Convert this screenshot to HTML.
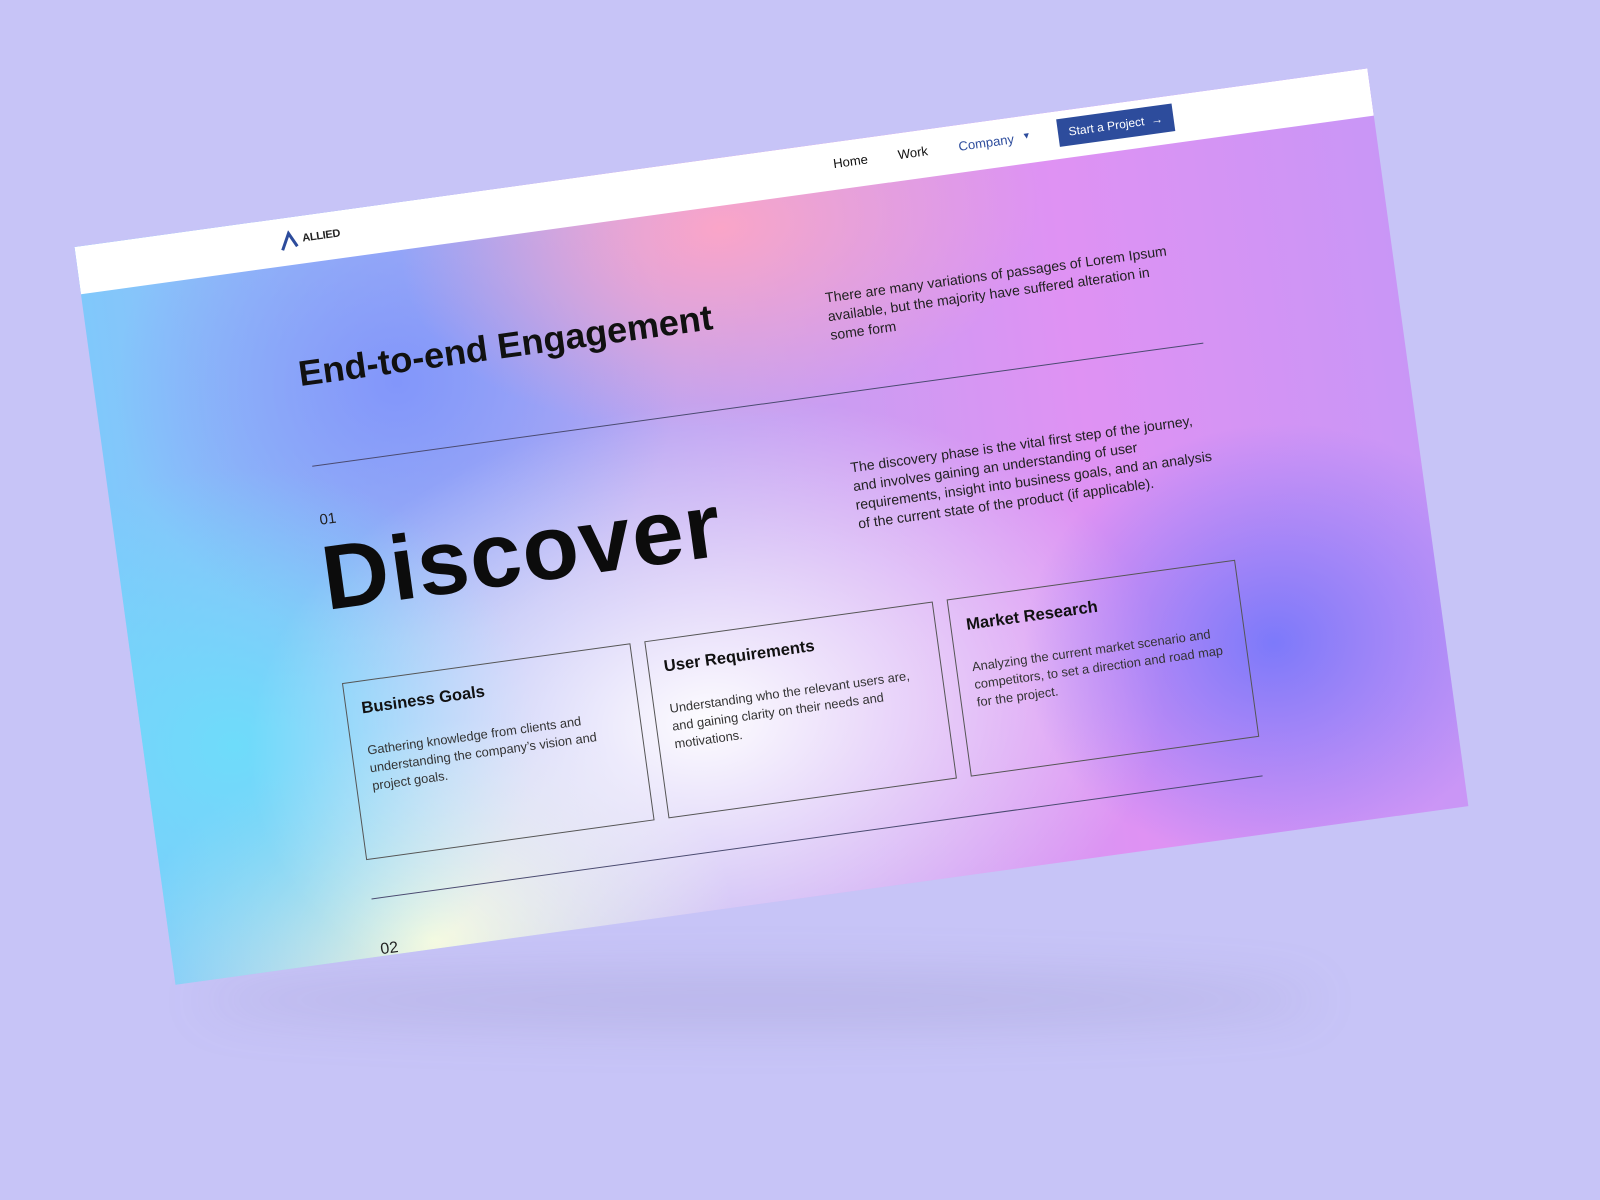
<!DOCTYPE html>
<html><head><meta charset="utf-8"><style>
html,body{margin:0;padding:0;width:1600px;height:1200px;overflow:hidden;background:#c7c4f7;font-family:"Liberation Sans",sans-serif;}
.shadow{position:absolute;left:200px;top:975px;width:1120px;height:50px;border-radius:50%;background:rgba(110,105,160,0.16);filter:blur(24px);}
.page{position:absolute;left:0;top:0;width:1300px;height:750px;transform-origin:0 0;transform:matrix(0.9945,-0.1374,0.1347,0.9836,74.5,247);overflow:hidden;
background:
radial-gradient(ellipse 250px 220px at 1130px 560px, rgba(120,120,250,0.95), rgba(140,130,250,0) 100%),
radial-gradient(ellipse 460px 320px at 560px 560px, rgba(255,255,255,0.97), rgba(255,255,255,0) 100%),
radial-gradient(ellipse 300px 280px at 90px 520px, rgba(110,220,250,1), rgba(110,220,250,0) 100%),
radial-gradient(ellipse 300px 220px at 260px 740px, rgba(245,250,220,1), rgba(245,250,220,0) 100%),
radial-gradient(ellipse 320px 200px at 640px 70px, rgba(250,165,200,1), rgba(250,160,200,0) 100%),
radial-gradient(ellipse 280px 260px at 300px 180px, rgba(130,150,250,1), rgba(130,150,250,0) 100%),
linear-gradient(90deg,#80c8fb 0%,#b9a6f2 40%,#df92f3 75%,#c996f6 100%);}
.hdr{position:absolute;left:0;top:0;width:1300px;height:48px;background:#fff;}
.abs{position:absolute;white-space:nowrap;}
.nav{font-size:13px;color:#111;top:14px;}
.btn{left:986px;top:8px;width:116px;height:28px;background:#2d4c9c;color:#fff;font-size:12px;line-height:28px;text-align:center;}
h1{margin:0;position:absolute;left:204px;top:137px;font-size:36px;font-weight:bold;color:#111;white-space:nowrap;}
.p{position:absolute;font-size:14px;line-height:19px;color:#222;}
.hr{position:absolute;left:205px;width:896px;height:1px;background:#4a4a70;}
.card{position:absolute;top:472px;width:288px;height:178px;border:1px solid #555;}
.card h3{margin:0;position:absolute;left:15px;top:18px;font-size:16.5px;color:#111;}
.card p{margin:0;position:absolute;left:15px;top:61px;width:262px;font-size:12.8px;line-height:18px;color:#333;}
</style></head><body>
<div class="shadow"></div>
<div class="page">
 <div class="hdr">
  <svg class="abs" style="left:203px;top:13px" width="22" height="20" viewBox="0 0 22 20"><path d="M2 19 L10 3 L17 17" fill="none" stroke="#2d4c9c" stroke-width="3"/><path d="M7 19 L11 12" stroke="#fff" stroke-width="2"/></svg>
  <div class="abs" style="left:226px;top:17px;font-size:11px;font-weight:bold;color:#222;letter-spacing:-0.3px">ALLIED</div>
  <div class="abs nav" style="left:760px">Home</div>
  <div class="abs nav" style="left:825px">Work</div>
  <div class="abs nav" style="left:886px;color:#2d4c9c">Company</div>
  <div class="abs" style="left:950px;top:15px;font-size:9px;color:#2d4c9c">▼</div>
  <div class="abs btn">Start a Project &nbsp;→</div>
 </div>
 <h1>End-to-end Engagement</h1>
 <div class="p" style="left:734px;top:145px;width:345px">There are many variations of passages of Lorem Ipsum available, but the majority have suffered alteration in some form</div>
 <div class="hr" style="top:251px"></div>
 <div class="abs" style="left:205px;top:298px;font-size:15px;color:#222">01</div>
 <div class="abs" style="left:200px;top:314px;font-size:92px;font-weight:bold;color:#0c0c0c;letter-spacing:1.5px">Discover</div>
 <div class="p" style="left:736px;top:318px;width:370px">The discovery phase is the vital first step of the journey, and involves gaining an understanding of user requirements, insight into business goals, and an analysis of the current state of the product (if applicable).</div>
 <div class="card" style="left:205px"><h3>Business Goals</h3><p>Gathering knowledge from clients and understanding the company’s vision and project goals.</p></div>
 <div class="card" style="left:509px"><h3>User Requirements</h3><p>Understanding who the relevant users are, and gaining clarity on their needs and motivations.</p></div>
 <div class="card" style="left:813px"><h3>Market Research</h3><p>Analyzing the current market scenario and competitors, to set a direction and road map for the project.</p></div>
 <div class="hr" style="top:691px"></div>
 <div class="abs" style="left:207px;top:735px;font-size:16px;color:#222">02</div>
</div>
</body></html>
